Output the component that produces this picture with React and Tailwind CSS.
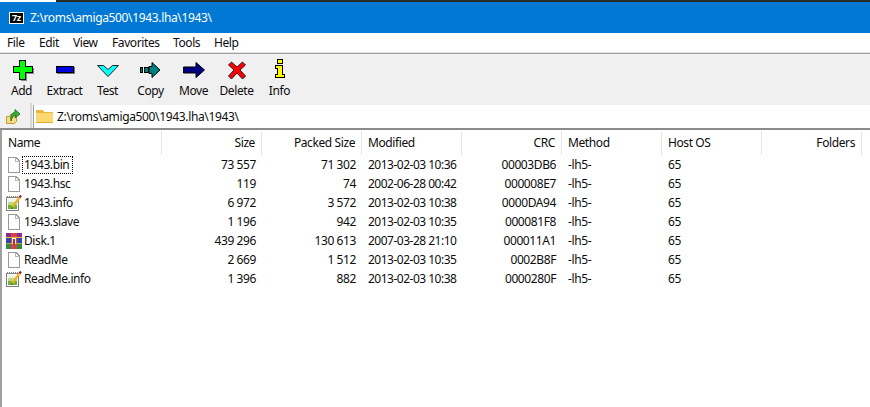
const font = { fontFamily: '"Noto Sans", "Open Sans", sans-serif' };

const rows = [
  ["1943.bin", "73 557", "71 302", "2013-02-03 10:36", "00003DB6", "file"],
  ["1943.hsc", "119", "74", "2002-06-28 00:42", "000008E7", "file"],
  ["1943.info", "6 972", "3 572", "2013-02-03 10:38", "0000DA94", "note"],
  ["1943.slave", "1 196", "942", "2013-02-03 10:35", "000081F8", "file"],
  ["Disk.1", "439 296", "130 613", "2007-03-28 21:10", "000011A1", "rar"],
  ["ReadMe", "2 669", "1 512", "2013-02-03 10:35", "0002B8F", "file"],
  ["ReadMe.info", "1 396", "882", "2013-02-03 10:38", "0000280F", "note"],
];

const Box = ({ children }) => (
  <svg width="24" height="24" viewBox="0 0 24 24" shapeRendering="crispEdges">{children}</svg>
);

const AddIcon = () => (
  <Box>
    <path d="M9.500 3.500h6v6h6.500v6h-6.500v6.500h-6V15.500H3.500v-6h6z" fill="#00ff00" stroke="#000" />
    <path d="M16 16.500h7V11M16.500 17v6H11" fill="none" stroke="#888" />
  </Box>
);
const ExtractIcon = () => (
  <Box>
    <rect x="3.500" y="9.500" width="17" height="6" fill="#0000e0" stroke="#000" />
    <path d="M4 16.500h17.500V10" fill="none" stroke="#777" />
  </Box>
);
const TestIcon = () => (
  <Box>
    <path d="M1.500 8.500h6l4.500 4 4.500-4h6L12 19.500z" fill="#00ffff" stroke="#222" strokeWidth="1" shapeRendering="auto" />
  </Box>
);
const CopyIcon = () => (
  <Box>
    <g transform="translate(-1 1)">
      <rect x="2.500" y="9.500" width="2" height="5" fill="#008080" stroke="#000" />
      <rect x="6.500" y="9.500" width="4" height="5" fill="#008080" stroke="#000" />
      <path d="M11 8.500h3V4.500l8 7.500-8 7.500v-4h-3z" fill="#008080" stroke="#000" shapeRendering="auto" />
    </g>
  </Box>
);
const MoveIcon = () => (
  <Box>
    <path d="M1.500 10h12.500V5.500l8.500 7.500-8.500 7.500V16H1.500z" fill="#000080" stroke="#000" shapeRendering="auto" />
  </Box>
);
const DeleteIcon = () => (
  <Box>
    <g transform="translate(0 1)">
      <path d="M3.500 7l3-3 5.500 5 5.500-5 3 3-5.500 5 5.500 6-3 3-5.500-6-5.500 6-3-3 5.500-6z" fill="#ff0000" stroke="#222" strokeWidth="1" shapeRendering="auto" />
    </g>
  </Box>
);
const InfoIcon = () => (
  <Box>
    <rect x="9.500" y="2.500" width="5" height="4" fill="#ffff00" stroke="#000" />
    <path d="M7.500 8.500h7v9h2v3h-9v-3h2v-6h-2z" fill="#ffff00" stroke="#000" />
  </Box>
);

const tools = [
  ["Add", AddIcon],
  ["Extract", ExtractIcon],
  ["Test", TestIcon],
  ["Copy", CopyIcon],
  ["Move", MoveIcon],
  ["Delete", DeleteIcon],
  ["Info", InfoIcon],
];

const FileIcon = () => (
  <svg width="16" height="16" viewBox="0 0 16 16" shapeRendering="crispEdges">
    <path d="M2.500 0.500h7.500l3.500 3.500v11.500H2.500z" fill="#fff" stroke="#9a9a9a" />
    <path d="M9.500 0.500v4h4" fill="none" stroke="#b8b8b8" />
  </svg>
);
const NoteIcon = () => (
  <svg width="16" height="16" viewBox="0 0 16 16">
    <rect x="0.500" y="2.500" width="12" height="13" fill="#fff" stroke="#808080" shapeRendering="crispEdges" />
    <path d="M1 1.500h11" stroke="#888" strokeDasharray="1 1" shapeRendering="crispEdges" />
    <rect x="2" y="4" width="9" height="3" fill="#eef6e0" />
    <rect x="2" y="7" width="9" height="3" fill="#bcdc8c" />
    <rect x="2" y="10" width="9" height="4" fill="#6cb43c" />
    <path d="M6 12.500L13.500 2.500" stroke="#f0b020" strokeWidth="2.200" />
    <path d="M13.500 2.500L15 0.500" stroke="#a01828" strokeWidth="2.200" />
    <path d="M5 14l1-2 1 1z" fill="#333" />
  </svg>
);
const RarIcon = () => (
  <svg width="16" height="16" viewBox="0 0 16 16" shapeRendering="crispEdges">
    <rect x="0" y="0" width="16" height="5" fill="#8a2a8a" />
    <rect x="0" y="5" width="16" height="5" fill="#2a48b8" />
    <rect x="0" y="10" width="16" height="6" fill="#2a9040" />
    <rect x="5" y="0" width="6" height="16" fill="#d84048" />
    <rect x="0" y="4" width="16" height="1" fill="#e8c040" />
    <rect x="0" y="10" width="16" height="1" fill="#c8a040" />
    <rect x="6" y="5" width="4" height="6" fill="#f4f0e0" />
    <rect x="7" y="6" width="2" height="5" fill="#c82020" />
  </svg>
);
const icons = { file: FileIcon, note: NoteIcon, rar: RarIcon };

const FolderIcon = () => (
  <svg width="17" height="13" viewBox="0 0 17 13" shapeRendering="crispEdges">
    <path d="M0 0h6l2 2h9v11H0z" fill="#e8b93c" />
    <rect x="0" y="3" width="17" height="10" fill="#fcd873" />
    <rect x="0" y="12" width="17" height="1" fill="#e0ac30" />
  </svg>
);
const UpIcon = () => (
  <svg width="15" height="17" viewBox="0 0 15 17">
    <path d="M0.500 9.500h3l1-2h6v7l-2 2h-8z" fill="#f8dc80" stroke="#c49a38" />
    <path d="M5 14c-1-4 0-8 4-9V2.500L14 7l-5 4V8C7 8.500 6 11 5 14z" fill="#3ca832" stroke="#1d6e1a" strokeWidth="0.800" />
  </svg>
);

const SevenZip = () => (
  <div className="w-[15px] h-[12px] bg-white flex items-center justify-center">
    <div className="w-[13px] h-[10px] bg-black flex items-center justify-center text-white text-[9px] leading-[10px] font-bold" style={font}>
      <span>7</span><span>z</span>
    </div>
  </div>
);

const cols = "grid grid-cols-[160px_100px_100px_100px_100px_100px_100px_100px_100px]";

const Head = ({ children, right }) => (
  <div className={`h-[24px] px-[6px] flex items-center border-r border-[#e5e5e5] ${right ? "justify-end" : ""}`}>
    {children}
  </div>
);

export default function App() {
  return (
    <div className="w-[870px] h-[407px] overflow-hidden bg-white flex flex-col text-[12px] leading-[16px] tracking-[-0.4px] text-[#0c0c0c]" style={font}>
      <div className="h-[2px] bg-[#2a2a2a] ml-[56px]" />
      <div className="h-[31px] bg-[#0078d4] flex items-center pl-[9px] gap-[6px] text-white">
        <SevenZip />
        <span className="tracking-[-0.35px]">Z:\roms\amiga500\1943.lha\1943\</span>
      </div>
      <div className="h-[19px] bg-white flex items-center pl-[7px]">
        <span className="w-[32px]">File</span>
        <span className="w-[34px]">Edit</span>
        <span className="w-[39px]">View</span>
        <span className="w-[61px]">Favorites</span>
        <span className="w-[41px]">Tools</span>
        <span>Help</span>
      </div>
      <div className="h-[1px] bg-[#e3e3e3]" />
      <div className="h-[1px] bg-[#a0a0a0]" />
      <div className="h-[49px] bg-[#f0f0f0] flex">
        {tools.map(([label, Icon]) => (
          <div key={label} className="w-[43px] flex flex-col items-center pt-[3px]">
            <Icon />
            <span className="mt-[2px] whitespace-nowrap">{label}</span>
          </div>
        ))}
      </div>
      <div className="h-[25px] bg-[#f0f0f0] flex items-end">
        <div className="w-[32px] h-[25px] flex items-center pl-[6px] border-r-2 border-[#d8d8d8]">
          <UpIcon />
        </div>
        <div className="ml-[1px] flex-1 h-[23px] bg-white flex items-center pl-[2px] gap-[4px] border-l border-[#a0a0a0]">
          <FolderIcon />
          <span className="tracking-[-0.35px]">Z:\roms\amiga500\1943.lha\1943\</span>
        </div>
      </div>
      <div className="h-[2px] bg-[#8c8c8c]" />
      <div className="flex-1 border-l-2 border-[#a0a0a0]">
        <div className={`${cols} h-[25px] pt-[1px]`}>
          <Head>Name</Head>
          <Head right>Size</Head>
          <Head right>Packed Size</Head>
          <Head>Modified</Head>
          <Head right>CRC</Head>
          <Head>Method</Head>
          <Head>Host OS</Head>
          <Head right>Folders</Head>
        </div>
        {rows.map(([name, size, packed, date, crc, kind], i) => {
          const Icon = icons[kind];
          return (
            <div key={name} className={`${cols} h-[19px] items-center`}>
              <div className="flex items-center pl-[4px]">
                <Icon />
                <span className={`pl-[2px] pr-[4px] h-[18px] flex items-center ${i === 0 ? "outline-1 outline-dotted outline-black -outline-offset-1" : ""}`}>{name}</span>
              </div>
              <div className="text-right pr-[6px]">{size}</div>
              <div className="text-right pr-[6px]">{packed}</div>
              <div className="pl-[6px] whitespace-nowrap tracking-[-0.5px]">{date}</div>
              <div className="text-right pr-[6px]">{crc}</div>
              <div className="pl-[6px]">-lh5-</div>
              <div className="pl-[6px]">65</div>
              <div />
            </div>
          );
        })}
      </div>
    </div>
  );
}
